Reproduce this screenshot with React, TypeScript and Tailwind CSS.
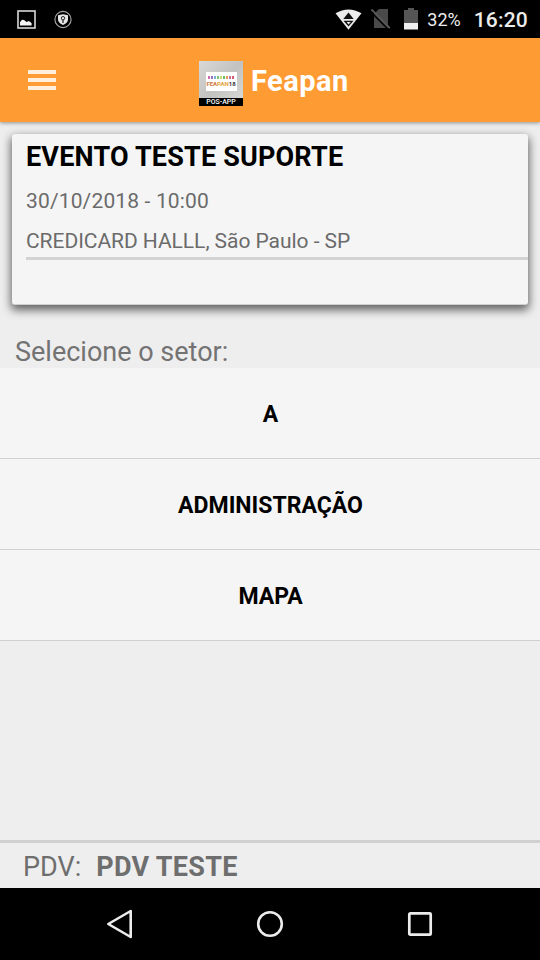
interface Evento {
  nome: string;
  data: string;
  local: string;
}

const evento: Evento = {
  nome: "EVENTO TESTE SUPORTE",
  data: "30/10/2018 - 10:00",
  local: "CREDICARD HALLL, São Paulo - SP",
};

const setores = ["A", "ADMINISTRAÇÃO", "MAPA"];

const logoDots = [
  "bg-[#c8439a]",
  "bg-[#8a4fa8]",
  "bg-[#5c9fd0]",
  "bg-[#5cb85c]",
  "bg-[#c0d04a]",
  "bg-[#3fae49]",
  "bg-[#d9822b]",
  "bg-[#b04a90]",
  "bg-[#d6334c]",
];

function StatusBar() {
  return (
    <div className="flex h-[38px] shrink-0 items-center justify-between bg-black pl-[17px] pr-3 text-[#ececec]">
      <div className="flex items-center gap-[18px]">
        <svg width="19" height="19" viewBox="0 0 19 19">
          <rect x="1" y="1" width="17" height="17" fill="none" stroke="#d8d8d8" strokeWidth="1.6" />
          <path d="M3 15.5v-3.2l2-2.6 2 .2 2.6 2 2.2-.8 1.8 1.1 1 1v2.3z" fill="#f4f4f4" />
        </svg>
        <svg width="18" height="19" viewBox="0 0 18 19">
          <circle cx="9" cy="9.5" r="8.1" fill="none" stroke="#a9a9a9" strokeWidth="1.1" />
          <path d="M9 4.2l5 1.1v4.2c0 2.3-2.2 4.3-5 5.6-2.8-1.3-5-3.3-5-5.6V5.3z" fill="#e6e6e6" />
          <circle cx="9" cy="8.2" r="1.7" fill="#e6e6e6" stroke="#222" />
          <path d="M9 10v3" stroke="#222" strokeWidth="1.2" />
        </svg>
      </div>
      <div className="flex items-center">
        <svg width="28" height="21" viewBox="0 0 28 21">
          <path d="M.5 4.3Q13.5-3.3 26.5 4.3L13.5 20.7z" fill="#ececec" />
          <path d="M13.5 3.6l5.2 6.4H8.3z" fill="#111" />
          <path d="M8.5 11.8h10l-5 5.7z" fill="#111" />
          <path d="M11.6 13h4l-2 2.4z" fill="#ececec" />
        </svg>
        <svg className="ml-2" width="20" height="20" viewBox="0 0 20 20">
          <path d="M8 0h9v19H3V5z" fill="#4a4a4a" />
          <path d="M0 3l17 17" stroke="#000" strokeWidth="1.6" />
          <path d="M.5.5l18.3 18.6" stroke="#585858" strokeWidth="1.9" />
        </svg>
        <svg className="ml-[13px]" width="14" height="22" viewBox="0 0 14 22">
          <path d="M4 0h6v2h4v13H0V2h4z" fill="#555" />
          <path d="M0 15h14v6.5H0z" fill="#efefef" />
        </svg>
        <span className="ml-[9px] pt-0.5 text-[18px] leading-none">32%</span>
        <span className="ml-[13px] pt-0.5 text-[21px] font-medium leading-none tracking-[0.2px]">
          16:20
        </span>
      </div>
    </div>
  );
}

function Logo() {
  return (
    <div className="mt-1.5 flex h-[45px] w-11 flex-col bg-gradient-to-br from-[#d9d9d9] via-[#c2c2c0] to-[#dcdcd9]">
      <div className="flex flex-1 items-center justify-center">
        <div className="mt-1 flex h-[19px] w-[31px] flex-col items-center justify-center bg-white">
          <div className="flex gap-px opacity-80">
            {logoDots.map((dot, index) => (
              <span key={index} className={`h-[3px] w-[2px] ${dot}`} />
            ))}
          </div>
          <p className="mt-0.5 whitespace-nowrap text-[6px] font-bold leading-[6px]">
            <span className="text-[#d0743c]">FEA</span>
            <span className="text-[#e2a33a]">PAN</span>
            <span className="text-[#333]">18</span>
          </p>
        </div>
      </div>
      <p className="h-2 bg-black text-center text-[7px] font-medium leading-2 text-white">POS-APP</p>
    </div>
  );
}

function Header() {
  return (
    <header className="relative z-10 flex h-[84px] shrink-0 items-center bg-[#ff9b33] shadow-[0_1px_4px_rgba(0,0,0,0.4)]">
      <button className="mb-px ml-7 flex w-7 flex-col gap-1">
        <span className="h-1 bg-[#fff0dd]" />
        <span className="h-1 bg-[#fff0dd]" />
        <span className="h-1 bg-[#fff0dd]" />
      </button>
      <div className="ml-[143px] flex items-center gap-2">
        <Logo />
        <h1 className="mt-0.5 text-[29px] font-bold leading-9 tracking-[0.45px] text-white">Feapan</h1>
      </div>
    </header>
  );
}

function NavBar() {
  return (
    <nav className="flex h-[72px] shrink-0 items-center justify-center gap-[122px] bg-black text-[#ececec]">
      <svg width="28" height="30" viewBox="0 0 28 30">
        <path d="M24.7 2v26L2.3 15z" fill="none" stroke="currentColor" strokeWidth="2.6" strokeLinejoin="round" />
      </svg>
      <svg width="28" height="28" viewBox="0 0 28 28">
        <circle cx="14" cy="14" r="11.8" fill="none" stroke="currentColor" strokeWidth="2.6" />
      </svg>
      <svg width="28" height="28" viewBox="0 0 28 28">
        <rect x="3.3" y="3.3" width="21.4" height="21.4" rx="1" fill="none" stroke="currentColor" strokeWidth="2.7" />
      </svg>
    </nav>
  );
}

export default function App() {
  return (
    <div className="flex h-[960px] w-[540px] flex-col overflow-hidden bg-[#eeeeee] font-['Roboto',sans-serif]">
      <StatusBar />
      <Header />

      <main className="flex flex-1 flex-col">
        <section className="mx-3 mt-3 h-[171px] rounded-[3px] border-b border-[#d0d0d0] bg-[#f5f5f5] pl-3.5 shadow-[0_4px_10px_1px_rgba(0,0,0,0.6)]">
          <h2 className="text-[27px] font-bold leading-[46px] tracking-[0.18px] text-black">{evento.nome}</h2>
          <p className="text-[21px] leading-[42px] tracking-[0.15px] text-[#6b6b6b]">{evento.data}</p>
          <p className="mt-[3px] border-b-[3px] border-[#d3d3d3] text-[21px] leading-8 tracking-[-0.05px] text-[#6b6b6b]">
            {evento.local}
          </p>
        </section>

        <p className="mt-[31px] pl-[15px] text-[27px] leading-8 text-[#737373]">Selecione o setor:</p>

        <ul>
          {setores.map((setor) => (
            <li
              key={setor}
              className="flex h-[91px] items-center justify-center border-b border-[#d0d0d0] bg-[#f5f5f5] pl-px pt-1 text-[23px] font-bold text-black"
            >
              {setor}
            </li>
          ))}
        </ul>
      </main>

      <footer className="flex h-12 shrink-0 items-center gap-[15px] border-t-[3px] border-[#d0d0d0] pl-[23px] pt-1 text-[27px] text-[#6e6e6e]">
        <span>PDV:</span>
        <span className="font-bold tracking-[0.3px]">PDV TESTE</span>
      </footer>
      <NavBar />
    </div>
  );
}
